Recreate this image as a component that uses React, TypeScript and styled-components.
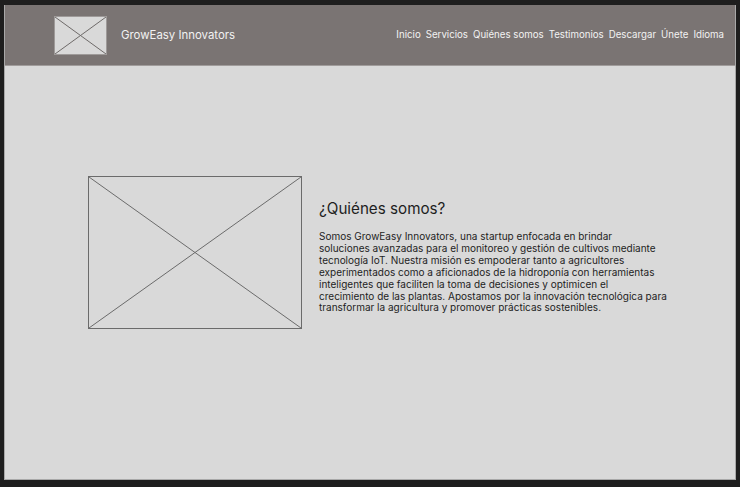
import React from "react";
import styled, { createGlobalStyle } from "styled-components";

const Global = createGlobalStyle`
  html, body { margin: 0; padding: 0; background: #1e1e1e; }
  body { font-family: Inter, "Noto Sans", sans-serif; }
  * { box-sizing: border-box; }
`;

const Frame = styled.div`
  margin: 5px 0 0 4px;
  width: 732px;
  height: 475px;
  display: flex;
  flex-direction: column;
  background: #d9d9d9;
  border-right: 1px solid #a8a8a8;
  border-bottom: 1px solid #a8a8a8;
  border-left: 1px solid #a8a8a8;
  overflow: hidden;
`;

const Header = styled.header`
  height: 61px;
  flex: none;
  background: #7a7473;
  border-bottom: 1px solid #a09c9b;
  display: flex;
  align-items: center;
  padding: 0 11px 0 49px;
`;

const Brand = styled.div`
  display: flex;
  align-items: center;
  gap: 14px;
`;

const Placeholder = styled.div<{ $w: number; $h: number; $line: string; $border: string }>`
  width: ${(p) => p.$w}px;
  height: ${(p) => p.$h}px;
  flex: none;
  background: #d9d9d9;
  border: 1px solid ${(p) => p.$border};
  display: flex;
  svg { display: block; width: 100%; height: 100%; }
  line { stroke: ${(p) => p.$line}; stroke-width: 1; vector-effect: non-scaling-stroke; }
`;

const BrandName = styled.span`
  color: #f2f2f2;
  font-size: 11.4px;
`;

const Nav = styled.nav`
  margin-left: auto;
  display: flex;
  gap: 5px;
  padding-bottom: 1px;
`;

const NavLink = styled.a`
  color: #f2f2f2;
  font-size: 9.7px;
  text-decoration: none;
`;

const Main = styled.main`
  flex: 1;
  display: flex;
  align-items: flex-start;
  padding: 110px 0 0 83px;
  gap: 17px;
`;

const Text = styled.section`
  padding-top: 23px;
  width: 380px;
`;

const Heading = styled.h1`
  margin: 0 0 13px;
  font-size: 15.2px;
  font-weight: 400;
  color: #1e1e1e;
`;

const Paragraph = styled.p`
  margin: 0;
  font-size: 10px;
  line-height: 11.9px;
  color: #1e1e1e;
  white-space: nowrap;
`;

function Cross({ w, h, line, border }: { w: number; h: number; line: string; border: string }) {
  return (
    <Placeholder $w={w} $h={h} $line={line} $border={border}>
      <svg viewBox="0 0 100 100" preserveAspectRatio="none">
        <line x1="0" y1="0" x2="100" y2="100" />
        <line x1="100" y1="0" x2="0" y2="100" />
      </svg>
    </Placeholder>
  );
}

const links = ["Inicio", "Servicios", "Quiénes somos", "Testimonios", "Descargar", "Únete", "Idioma"];

const lines = [
  "Somos GrowEasy Innovators, una startup enfocada en brindar",
  "soluciones avanzadas para el monitoreo y gestión de cultivos mediante",
  "tecnología IoT. Nuestra misión es empoderar tanto a agricultores",
  "experimentados como a aficionados de la hidroponía con herramientas",
  "inteligentes que faciliten la toma de decisiones y optimicen el",
  "crecimiento de las plantas. Apostamos por la innovación tecnológica para",
  "transformar la agricultura y promover prácticas sostenibles.",
];

export default function App() {
  return (
    <>
      <Global />
      <Frame>
        <Header>
          <Brand>
            <Cross w={53} h={39} line="#6e6a69" border="#9e9a99" />
            <BrandName>GrowEasy Innovators</BrandName>
          </Brand>
          <Nav>
            {links.map((l) => (
              <NavLink key={l} href="#">{l}</NavLink>
            ))}
          </Nav>
        </Header>
        <Main>
          <Cross w={214} h={153} line="#6b6b6b" border="#6b6b6b" />
          <Text>
            <Heading>¿Quiénes somos?</Heading>
            <Paragraph>
              {lines.map((l, i) => (
                <React.Fragment key={i}>
                  {l}
                  {i < lines.length - 1 && <br />}
                </React.Fragment>
              ))}
            </Paragraph>
          </Text>
        </Main>
      </Frame>
    </>
  );
}
